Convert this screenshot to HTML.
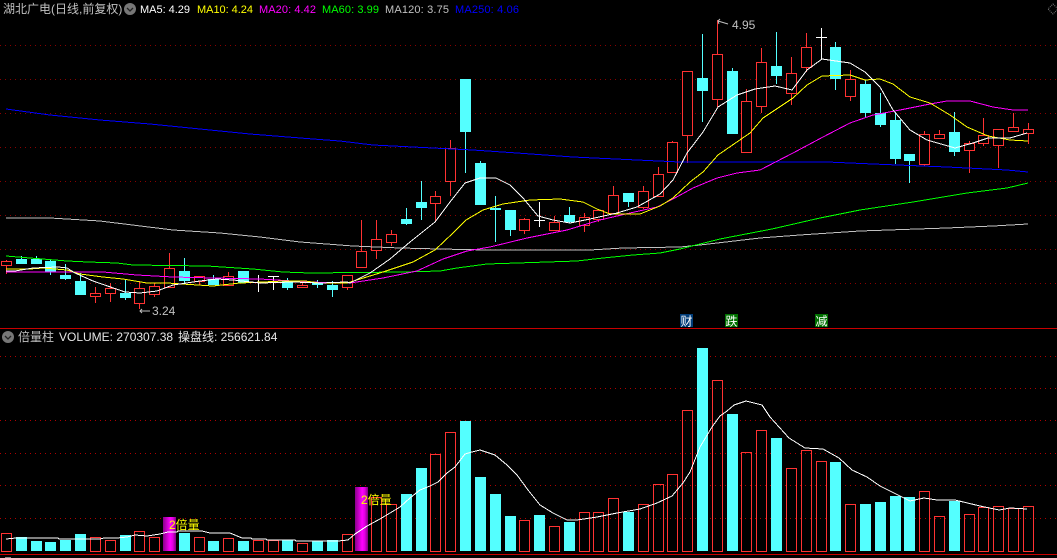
<!DOCTYPE html>
<html lang="zh"><head><meta charset="utf-8"><title>湖北广电</title>
<style>
html,body{margin:0;padding:0;background:#000;width:1057px;height:558px;overflow:hidden}
svg{display:block}
text{font-family:"Liberation Sans","WenQuanYi Zen Hei","Noto Sans CJK SC",sans-serif;font-size:12px;white-space:pre}
</style></head><body>
<svg width="1057" height="558" viewBox="0 0 1057 558" xmlns="http://www.w3.org/2000/svg">
<defs>
<linearGradient id="m" x1="0" x2="1" y1="0" y2="0"><stop offset="0" stop-color="#8a008a"/><stop offset=".55" stop-color="#ff00ff"/><stop offset=".75" stop-color="#e000e0"/><stop offset="1" stop-color="#800080"/></linearGradient>
</defs>
<rect width="1057" height="558" fill="#000"/>
<!-- grid -->
<path d="M0 45.5H1057M0 79.5H1057M0 113.5H1057M0 147.5H1057M0 181.5H1057M0 215.5H1057M0 249.5H1057M0 283.5H1057" stroke="#8a0000" stroke-dasharray="1 4" fill="none" shape-rendering="crispEdges"/>
<path d="M0 356.5H1057M0 388.5H1057M0 420.5H1057M0 453.5H1057M0 485.5H1057M0 518.5H1057" stroke="#b00000" stroke-dasharray="1 4" fill="none" shape-rendering="crispEdges"/>
<!-- dividers -->
<rect x="0" y="328" width="1057" height="1" fill="#c80000"/>
<rect x="0" y="554" width="1057" height="1" fill="#c80000"/>
<rect x="5" y="557" width="6" height="1" fill="#888"/>
<!-- candle wicks -->
<path shape-rendering="crispEdges" fill="none" stroke="#ff3232" d="M6.5 260V274M95.5 287V303M110.5 283V302M139.5 281V309M154.5 283V297M169.5 253V287M199.5 276V285M228.5 272V285M302.5 281V287M347.5 275V290M361.5 220V267M376.5 220V259M391.5 230V246M435.5 191V222M450.5 140V196M524.5 218V234M554.5 216V230M584.5 213V232M598.5 210V222M613.5 186V213M643.5 186V209M658.5 167V196M672.5 141V172M687.5 71V163M717.5 20V107M746.5 89V152M761.5 48V113M791.5 57V105M806.5 33V72M850.5 70V101M924.5 131V166M939.5 130V138M969.5 141V173M983.5 118V146M998.5 129V168M1013.5 113V132M1028.5 123V144"/>
<path shape-rendering="crispEdges" fill="none" stroke="#54ffff" d="M21.5 256V263M36.5 256V263M50.5 259V275M65.5 264V280M80.5 273V295M125.5 279V300M184.5 258V283M213.5 275V285M243.5 271V283M287.5 278V290M317.5 280V288M332.5 281V297M406.5 208V225M421.5 181V220M465.5 79V173M480.5 161V205M495.5 196V242M510.5 210V236M569.5 207V223M628.5 193V207M702.5 34V122M732.5 68V134M776.5 32V84M835.5 42V90M865.5 80V117M880.5 93V127M895.5 112V164M909.5 154V183M954.5 112V156"/>
<path shape-rendering="crispEdges" fill="none" stroke="#ffffff" d="M258.5 275V292M253 282.5H264M273.5 276V290M268 276.5H279M539.5 202V227M534 220.5H545M821.5 28V60M816 37.5H827"/>
<!-- candle bodies red -->
<path shape-rendering="crispEdges" fill="#000" stroke="#ff3232" d="M1.5 261.5h10v4h-10zM90.5 293.5h10v3h-10zM105.5 288.5h10v5h-10zM134.5 288.5h10v15h-10zM149.5 286.5h10v8h-10zM164.5 268.5h10v19h-10zM194.5 276.5h10v5h-10zM223.5 276.5h10v9h-10zM297.5 285.5h10v2h-10zM342.5 275.5h10v12h-10zM356.5 251.5h10v16h-10zM371.5 239.5h10v11h-10zM386.5 234.5h10v8h-10zM430.5 196.5h10v7h-10zM445.5 148.5h10v33h-10zM519.5 219.5h10v11h-10zM549.5 222.5h10v8h-10zM579.5 217.5h10v8h-10zM593.5 210.5h10v9h-10zM608.5 195.5h10v18h-10zM638.5 191.5h10v16h-10zM653.5 174.5h10v22h-10zM667.5 142.5h10v30h-10zM682.5 71.5h10v64h-10zM712.5 54.5h10v45h-10zM741.5 101.5h10v51h-10zM756.5 62.5h10v44h-10zM786.5 73.5h10v20h-10zM801.5 47.5h10v20h-10zM845.5 79.5h10v17h-10zM919.5 134.5h10v30h-10zM934.5 134.5h10v4h-10zM964.5 143.5h10v7h-10zM978.5 135.5h10v8h-10zM993.5 129.5h10v16h-10zM1008.5 127.5h10v4h-10zM1023.5 129.5h10v4h-10z"/>
<!-- candle bodies cyan -->
<path shape-rendering="crispEdges" fill="#54ffff" d="M16 259h11v5h-11zM31 259h11v5h-11zM45 261h11v11h-11zM60 275h11v4h-11zM75 281h11v14h-11zM120 293h11v5h-11zM179 271h11v10h-11zM208 279h11v6h-11zM238 271h11v12h-11zM282 281h11v7h-11zM312 283h11v2h-11zM327 285h11v5h-11zM401 219h11v5h-11zM416 202h11v6h-11zM460 79h11v53h-11zM475 163h11v42h-11zM490 208h11v2h-11zM505 210h11v20h-11zM564 215h11v7h-11zM623 193h11v9h-11zM697 78h11v13h-11zM727 71h11v63h-11zM771 66h11v10h-11zM830 47h11v32h-11zM860 84h11v29h-11zM875 113h11v12h-11zM890 120h11v39h-11zM904 154h11v7h-11zM949 132h11v20h-11z"/>
<!-- moving averages -->
<g fill="none" shape-rendering="crispEdges">
<polyline stroke="#0000ff" points="6,109 50,115 100,120 150,124 200,129 250,134 313,139 340,141 373,145 413,147 473,150 517,153 573,157 637,160 680,162 827,162 873,164 947,167 1007,170 1028,172"/>
<polyline stroke="#c0c0c0" points="6,218 50,218 100,221 173,230 220,233 260,237 300,242 353,246 400,248 440,249 487,250 590,250 623,248 680,247 700,245 760,238 800,235 860,231 917,229 947,228 993,226 1028,224"/>
<polyline stroke="#00ff00" points="6,256 30,258 67,261 88,262 117,263 133,265 207,266 253,269 283,272 310,273 403,272 440,271 457,268 487,264 517,263 547,262 577,261 603,258 633,255 660,253 680,249 720,239 772,229 820,218 860,210 913,202 967,193 1007,188 1028,183"/>
<polyline stroke="#ff00ff" points="6,272 43,272 67,272 103,272 137,275 173,277 213,278 260,279 293,281 333,283 350,283 383,278 417,271 443,259 467,251 490,247 527,238 567,230 600,220 630,213 657,207 673,199 693,188 717,178 737,173 760,170 793,153 823,137 850,123 873,115 900,110 930,104 947,101 970,101 993,107 1013,110 1028,110"/>
<polyline stroke="#ffff00" points="6,269 30,269 43,268 67,270 80,274 103,277 123,279 147,283 167,283 213,286 240,283 263,282 283,281 305,281 320,283 347,283 383,272 413,262 435,250 453,233 466,220 483,210 503,204 530,200 560,199 583,202 597,209 610,214 640,214 660,206 673,198 690,182 703,172 718,155 750,133 763,118 793,98 807,85 822,76 850,75 865,80 880,79 893,84 910,97 930,103 950,115 967,127 988,136 1010,140 1028,141"/>
<polyline stroke="#ffffff" points="6,271 15,271 33,268 58,267 67,268 75,273 93,281 125,292 140,293 157,291 173,285 200,281 217,279 233,280 260,283 293,282 320,283 347,282 350,283 370,273 390,259 410,242 435,222 450,202 465,183 480,178 496,178 510,185 523,198 538,216 553,220 570,223 590,219 617,213 637,207 660,194 673,180 687,153 703,132 718,107 737,95 755,89 775,86 792,90 807,70 822,59 850,63 865,72 880,87 893,110 910,130 927,140 955,148 973,143 988,138 1010,138 1027,133"/>
</g>
<!-- volume bars -->
<path shape-rendering="crispEdges" fill="#54ffff" d="M16 537h11v14h-11zM31 541h11v10h-11zM45 542h11v9h-11zM60 540h11v11h-11zM75 534h11v17h-11zM120 535h11v16h-11zM179 533h11v18h-11zM208 541h11v10h-11zM238 541h11v10h-11zM282 540h11v11h-11zM312 541h11v10h-11zM327 540h11v11h-11zM401 494h11v57h-11zM416 468h11v83h-11zM460 421h11v130h-11zM475 477h11v74h-11zM490 494h11v57h-11zM505 516h11v35h-11zM534 515h11v36h-11zM564 522h11v29h-11zM623 512h11v39h-11zM697 348h11v203h-11zM727 414h11v137h-11zM771 438h11v113h-11zM830 462h11v89h-11zM860 504h11v47h-11zM875 502h11v49h-11zM890 496h11v55h-11zM904 497h11v54h-11zM949 501h11v50h-11z"/>
<path shape-rendering="crispEdges" fill="none" stroke="#ff3232" d="M1.5 533.5h10v18h-10zM90.5 537.5h10v14h-10zM105.5 540.5h10v11h-10zM134.5 531.5h10v20h-10zM149.5 537.5h10v14h-10zM194.5 537.5h10v14h-10zM223.5 538.5h10v13h-10zM253.5 540.5h10v11h-10zM268.5 540.5h10v11h-10zM297.5 543.5h10v8h-10zM342.5 534.5h10v17h-10zM371.5 497.5h10v54h-10zM386.5 504.5h10v47h-10zM430.5 454.5h10v97h-10zM445.5 432.5h10v119h-10zM519.5 520.5h10v31h-10zM549.5 526.5h10v25h-10zM579.5 512.5h10v39h-10zM593.5 512.5h10v39h-10zM608.5 498.5h10v53h-10zM638.5 504.5h10v47h-10zM653.5 484.5h10v67h-10zM667.5 474.5h10v77h-10zM682.5 410.5h10v141h-10zM712.5 380.5h10v171h-10zM741.5 452.5h10v99h-10zM756.5 430.5h10v121h-10zM786.5 468.5h10v83h-10zM801.5 450.5h10v101h-10zM816.5 461.5h10v90h-10zM845.5 504.5h10v47h-10zM919.5 491.5h10v60h-10zM934.5 516.5h10v35h-10zM964.5 514.5h10v37h-10zM978.5 507.5h10v44h-10zM993.5 506.5h10v45h-10zM1008.5 508.5h10v43h-10zM1023.5 506.5h10v45h-10z"/>
<rect x="163" y="517" width="13" height="34" fill="url(#m)"/>
<rect x="355" y="487" width="13" height="64" fill="url(#m)"/>
<polyline fill="none" stroke="#fff" shape-rendering="crispEdges" points="6,539 16,538 58,538 59,539 100,539 104,538 117,538 127,537 135,535 147,536 160,534 168,532 177,532 178,531 202,531 210,533 230,533 242,538 251,538 252,539 266,539 267,540 295,540 296,541 338,541 348,540 355,534 367,526 380,519 400,507 410,498 420,490 430,486 438,482 447,473 455,467 465,454 472,452 480,450 495,455 507,465 517,475 528,490 540,505 553,513 567,520 577,520 597,517 617,513 640,509 657,503 672,496 683,483 690,472 700,447 712,427 720,416 727,411 734,405 746,401 762,405 770,417 789,438 805,448 823,449 839,458 852,470 867,477 880,486 900,496 910,501 924,498 937,500 955,500 980,506 999,510 1010,508 1027,509"/>
<text x="169" y="529" fill="#ffff00">2倍量</text>
<text x="361" y="504" fill="#ffff00">2倍量</text>
<!-- header -->
<text x="3" y="13" fill="#c0c0c0">湖北广电(日线,前复权)</text>
<circle cx="130" cy="9" r="6" fill="#777"/>
<path d="M127 8l3 3 3-3" fill="none" stroke="#222" stroke-width="1.3"/>
<text x="140" y="13" style="font-size:11px" fill="#ffffff" textLength="50">MA5: 4.29</text>
<text x="197" y="13" style="font-size:11px" fill="#ffff00" textLength="56">MA10: 4.24</text>
<text x="259" y="13" style="font-size:11px" fill="#ff00ff" textLength="57">MA20: 4.42</text>
<text x="322" y="13" style="font-size:11px" fill="#00ff00" textLength="57">MA60: 3.99</text>
<text x="385" y="13" style="font-size:11px" fill="#c0c0c0" textLength="64">MA120: 3.75</text>
<text x="455" y="13" style="font-size:11px" fill="#0000ff" textLength="64">MA250: 4.06</text>
<path d="M1053 4l5 5-5 5-5-5z" fill="none" stroke="#777" stroke-dasharray="1 1"/>
<!-- price labels -->
<path d="M150 311H140M142 309l-2 2 2 2" fill="none" stroke="#c0c0c0"/>
<text x="152" y="315" fill="#c0c0c0">3.24</text>
<path d="M728 24L718 21M720 19l-2 2 1 3" fill="none" stroke="#c0c0c0"/>
<text x="732" y="29" fill="#c0c0c0">4.95</text>
<!-- badges -->
<rect x="680" y="314" width="13" height="13" fill="#003c78"/>
<text x="680.5" y="325.5" fill="#fff">财</text>
<rect x="725" y="314" width="13" height="13" fill="#007000"/>
<text x="725.5" y="325.5" fill="#fff">跌</text>
<rect x="815" y="314" width="13" height="13" fill="#007000"/>
<text x="815.5" y="325.5" fill="#fff">减</text>
<!-- volume header -->
<circle cx="8" cy="337" r="6" fill="#777"/>
<path d="M5 336l3 3 3-3" fill="none" stroke="#222" stroke-width="1.3"/>
<text x="18" y="341" fill="#c0c0c0">倍量柱</text>
<text x="59" y="341" fill="#e6e6e6">VOLUME: 270307.38</text>
<text x="178" y="341" fill="#e6e6e6">操盘线: 256621.84</text>
</svg>
</body></html>
